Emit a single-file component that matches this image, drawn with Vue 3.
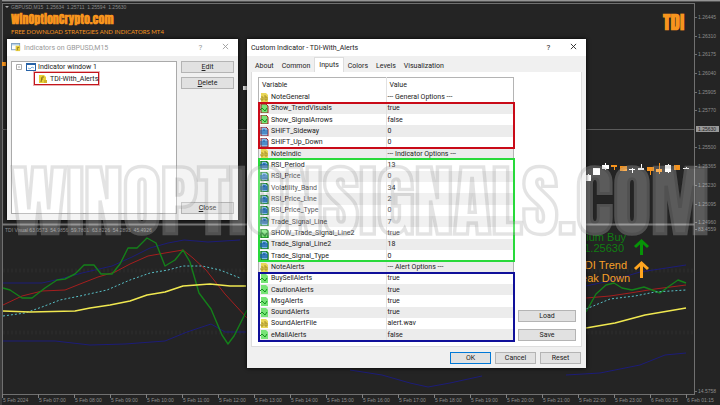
<script setup>
const bool = 'bool', str = 'str', num = 'num'
const groups = [
  { tone: 'plain', rows: [[str, 'NoteGeneral', '--- General Options ---']] },
  { tone: 'red', rows: [[bool, 'Show_TrendVisuals', 'true'], [bool, 'Show_SignalArrows', 'false'], [num, 'SHIFT_Sideway', '0'], [num, 'SHIFT_Up_Down', '0']] },
  { tone: 'plain', rows: [[str, 'NoteIndic', '--- Indicator Options ---']] },
  { tone: 'green', rows: [[num, 'RSI_Period', '13'], [num, 'RSI_Price', '0'], [num, 'Volatility_Band', '34'], [num, 'RSI_Price_Line', '2'], [num, 'RSI_Price_Type', '0'], [num, 'Trade_Signal_Line', '7'], [bool, 'SHOW_Trade_Signal_Line2', 'true'], [num, 'Trade_Signal_Line2', '18'], [num, 'Trade_Signal_Type', '0']] },
  { tone: 'plain', rows: [[str, 'NoteAlerts', '--- Alert Options ---']] },
  { tone: 'blue', rows: [[bool, 'BuySellAlerts', 'true'], [bool, 'CautionAlerts', 'true'], [bool, 'MsgAlerts', 'true'], [bool, 'SoundAlerts', 'true'], [str, 'SoundAlertFile', 'alert.wav'], [bool, 'eMailAlerts', 'false']] }
]
let n = 0
for (const g of groups) g.rows = g.rows.map(([type, name, value]) => ({ type, name, value, shaded: n++ % 2 === 1 }))

const tabs = ['About', 'Common', 'Inputs', 'Colors', 'Levels', 'Visualization']
const prices = [[17, '1.26445'], [36, '1.26310'], [54, '1.26175'], [73, '1.26040'], [92, '1.25905'], [110, '1.25770'], [147, '1.25500'], [166, '1.25365'], [185, '1.25230'], [204, '1.25095'], [222, '1.24960'], [229, '83.4559'], [391, '14.5758']]
const times = ['5 Feb 2024', '5 Feb 07:00', '5 Feb 08:00', '5 Feb 09:00', '5 Feb 10:00', '5 Feb 11:00', '5 Feb 12:00', '5 Feb 13:00', '5 Feb 14:00', '5 Feb 15:00', '5 Feb 16:00', '5 Feb 17:00', '5 Feb 18:00', '5 Feb 19:00', '5 Feb 20:00', '5 Feb 21:00', '5 Feb 22:00', '5 Feb 23:00', '6 Feb 00:15', '6 Feb 01:15']
const white = '#fff', orange = '#f7941d'
// x, body top, body height, wick top, wick bottom, width, colour
const candles = [
  [585, 175, 6, 174, 181, 6, white], [593, 168, 7, 168, 175, 7, white], [602, 165, 4, 163, 170, 7, white],
  [611, 165, 2, 165, 170, 6, orange], [620, 166, 5, 166, 171, 7, orange], [629, 169, 1, 168, 173, 6, white],
  [638, 168, 2, 164, 170, 6, white], [647, 167, 4, 167, 175, 7, orange], [656, 169, 3, 163, 174, 6, orange],
  [665, 165, 7, 164, 173, 6, white], [674, 165, 5, 165, 170, 6, orange], [683, 168, 1, 167, 169, 6, white]
]
</script>

<template>
  <main class="desktop">
    <svg class="chart" viewBox="0 0 720 405" preserveAspectRatio="none" role="img" aria-label="GBPUSD M15 chart">
      <rect width="720" height="405" fill="#242424" />
      <rect width="720" height="1" fill="#949494" />
      <rect y="1" width="720" height="1" fill="#555" />
      <rect width="2" height="405" fill="#3c3c3c" />
      <path d="M2.5 3V395M2 3.5H695M694.5 3V395M2 394.5H695" stroke="#707070" fill="none" />
      <path d="M2 224.5H695" stroke="#777" stroke-width="2" />
      <path d="M2 129.5H694" stroke="#5b5b5b" />
      <path d="M3 270.5H694M3 332.5H694" stroke="#292929" stroke-dasharray="2 2" stroke-width="4" />
      <path d="M5 6h4l-2 2z" fill="#aaa" />
      <rect x="2" y="62" width="4" height="4" fill="#f7941d" />
      <rect x="243" y="86" width="4" height="4" fill="#ddd" />
      <text x="11" y="9" class="axis">GBPUSD,M15&#160; 1.25634&#160; 1.25711&#160; 1.25594&#160; 1.25630</text>
      <text x="5" y="232" class="axis">TDI Visual 63.9573&#160; 54.9856&#160; 59.7801&#160; 63.8226&#160; 54.2893&#160; 45.4926</text>
      <g v-for="[y, label] in prices" :key="label">
        <path :d="`M694 ${y}.5h3`" stroke="#707070" />
        <text x="698" :y="y + 2" class="axis">{{ label }}</text>
      </g>
      <rect x="696" y="126" width="23" height="6" fill="#999" />
      <text x="698" y="131" class="axis dark">1.25630</text>
      <g v-for="(label, i) in times" :key="label">
        <path :d="`M${2.5 + i * 36} 394v4`" stroke="#808080" />
        <text :x="3 + i * 36" y="402" class="axis">{{ label }}</text>
      </g>

      <g fill="none" stroke-linejoin="round">
        <path class="band" d="M3 283H42L60 279L82 273L112 266L132 257L150 248L168 243L184 240L208 242L240 240" />
        <path class="band" d="M3 341H55L90 345L125 344L165 341L187 332L211 324L225 332H246M350 370L382 375L410 383L428 387L450 383L482 376M566 375L600 373L640 365L665 355L686 353M566 290L610 281L640 272L686 265" />
        <path class="red" d="M3 305L22 296L42 291L65 290L80 284L98 277L115 272L130 264L148 256L165 253L183 250L193 258L206 270L225 294L247 318M586 298L610 296L630 293L655 289L686 285" />
        <path class="green" d="M3 288L10 290L22 298H32L45 288L57 280L65 279L75 274L84 265H94L101 274H112L120 264L128 248H137L147 238L156 243L165 266L175 260L183 250L190 262L199 293L211 309L222 335L228 344L234 336L247 310M586 312L596 294L606 285L614 283L622 288L632 290L644 287L660 293L668 287L678 280L686 283" />
        <path class="cyan" d="M3 316L25 313L42 307L60 300L80 296L107 290L130 280L150 273L168 270L183 266H202L220 270L240 278M586 309L610 299L635 296L655 292L686 290" />
        <path class="yellow" d="M3 311L30 312L75 311L90 308L110 305L130 301L147 295L165 292L183 286L210 284L230 286H246M586 328L615 323L645 315L686 308" />
      </g>
      <g v-for="[x, y, h, top, bottom, w, color] in candles" :key="x" :fill="color">
        <rect :x="x" :y="y" :width="w" :height="h" />
        <rect :x="x + 3" :y="top" width="1" :height="bottom - top" />
      </g>
      <g fill="none" stroke-width="3">
        <path d="M641.500 255V242M635 247L641.500 241L648 247" stroke="#079307" />
        <path d="M641.500 278V264M635 269L641.500 263L648 269" stroke="#ffa51f" />
      </g>
      <text x="626" y="241" class="signal buy">Medium Buy</text>
      <text x="624" y="252" class="signal buy">1.25630</text>
      <text x="627" y="269" class="signal trend">TDI Trend</text>
      <text x="630" y="282" class="signal trend">Break Down</text>
      <text x="663" y="30" class="badge">TDI</text>
    </svg>

    <header class="brand">
      <h1>WinOptionCrypto.com</h1>
      <p>FREE DOWNLOAD STRATEGIES AND INDICATORS MT4</p>
    </header>

    <section class="window list-window" aria-label="Indicators on GBPUSD,M15">
      <div class="title-bar inactive">
        <svg class="title-icon" viewBox="0 0 12 10"><rect x=".5" y=".5" width="9" height="7" fill="#fff" stroke="#779bbd" /><path d="M1 2h8" stroke="#8bb7da" /><rect x="5" y="3" width="5" height="6" fill="#e6cc3e" /><path d="M7 8V5h2" stroke="#927a22" fill="none" /></svg>
        <span>Indicators on GBPUSD,M15</span>
        <button class="glyph" aria-label="Help">?</button>
        <button class="glyph" aria-label="Close window"><svg viewBox="0 0 8 8"><path d="M1 1l6 6M7 1L1 7" /></svg></button>
      </div>
      <div class="list-body">
        <ul class="tree">
          <li><svg class="toggle" viewBox="0 0 6 6"><path d="M.5.500h5v5h-5zM2 3h2" /></svg><svg class="tree-icon" viewBox="0 0 10 8"><rect x=".5" y=".5" width="9" height="7" fill="#fff" stroke="#2863a7" /><path d="M0 1h10" stroke="#2863a7" stroke-width="2" /><path d="M2 5l2 1 2-2 2 1" stroke="#7cb1df" fill="none" /></svg>Indicator window 1</li>
          <li class="selected"><svg class="tree-icon" viewBox="0 0 10 8"><path d="M1 0h5l2 2v6H1z" fill="#e8d136" /><path d="M3 7l1-5h2M3 4h2" stroke="#8a701c" fill="none" /><path d="M6 8V5h3v3z" fill="#d1b22b" /></svg>TDI-With_Alerts</li>
        </ul>
        <div class="side">
          <button><u>E</u>dit</button>
          <button><u>D</u>elete</button>
          <button class="last"><u>C</u>lose</button>
        </div>
      </div>
    </section>

    <section class="window input-window" aria-label="Custom Indicator - TDI-With_Alerts">
      <div class="title-bar">
        <span>Custom Indicator - TDI-With_Alerts</span>
        <button class="glyph" aria-label="Help">?</button>
        <button class="glyph" aria-label="Close window"><svg viewBox="0 0 8 8"><path d="M1 1l6 6M7 1L1 7" /></svg></button>
      </div>
      <nav class="tabs" role="tablist">
        <button v-for="tab in tabs" :key="tab" role="tab" :aria-selected="tab === 'Inputs'" :class="{ active: tab === 'Inputs' }">{{ tab }}</button>
      </nav>
      <div class="panel">
        <table>
          <thead><tr><th>Variable</th><th>Value</th></tr></thead>
          <tbody v-for="(group, i) in groups" :key="i" :class="group.tone">
            <tr v-for="row in group.rows" :key="row.name" :class="{ shaded: row.shaded }">
              <td>
                <svg class="type" :class="row.type" viewBox="0 0 9 9">
                  <path class="sheet" d="M1 0h5l2 2v7H1z" />
                  <path v-if="row.type === 'bool'" class="mark" d="M0 6l2-2 3 3 2-3" />
                  <path v-else-if="row.type === 'num'" class="mark" d="M1 3v4M3 3v4M3 3h2v4M7 3v4" />
                  <path v-else class="mark" d="M1 4h2v3H1V5M5 2v5h2V4H5" />
                </svg>{{ row.name }}
              </td>
              <td>{{ row.value }}</td>
            </tr>
          </tbody>
        </table>
        <div class="file-actions"><button>Load</button><button>Save</button></div>
      </div>
      <footer><button class="primary">OK</button><button>Cancel</button><button>Reset</button></footer>
    </section>

    <div class="watermark">WINOPTIONSIGNALS.COM</div>
  </main>
</template>

<style>
body { margin: 0; background: #242424; }
</style>

<style scoped>
* { box-sizing: border-box; }
.desktop { position: relative; min-height: 100vh; overflow: hidden; font: 7px/10px Roboto, "Liberation Sans", sans-serif; color: #222; }
.chart { position: absolute; inset: 0; width: 100%; height: 100%; }
.axis { font: 5px "Liberation Sans", sans-serif; fill: #8c8c8c; }
.dark { fill: #222; }
.band { stroke: #1c1c78; stroke-width: 1; }
.red { stroke: #a51e1e; stroke-width: 1; }
.green { stroke: #14801a; stroke-width: 1.4; }
.cyan { stroke: #58bfc6; stroke-width: 1; stroke-dasharray: 2 2; }
.yellow { stroke: #f0e850; stroke-width: 1.6; }
.signal { font: 11px "Liberation Sans", sans-serif; text-anchor: end; }
.buy { fill: #107d12; }
.trend { fill: #f7a028; }
.badge { font: 900 19px Impact, Anton, sans-serif; fill: #f7941d; }
.brand { position: absolute; left: 11px; top: 12px; color: #f7941d; }
h1 { margin: 0; font: 900 12px/14px Impact, Anton, sans-serif; }
.brand p { margin: 0; font: 6px/9px Lato, sans-serif; padding-top: 1px; }
button { font: inherit; color: inherit; padding: 0; margin: 0; border: 1px solid #b4b4b4; background: #e1e1e1; height: 12px; line-height: 10px; }
.window { position: absolute; background: #f0f0f0; display: flex; flex-direction: column; box-shadow: 0 0 4px #000; }
.list-window { left: 7px; top: 39px; width: 231px; height: 181px; }
.input-window { left: 247px; top: 39px; width: 339px; height: 329px; }
.title-bar { height: 17px; flex: none; display: flex; align-items: center; background: #fff; padding-left: 4px; }
.title-bar span { flex: 1; white-space: nowrap; }
.inactive { color: #999; }
.title-icon { width: 11px; height: 9px; margin-right: 2px; }
.glyph { width: 25px; height: 16px; border: 0; background: none; font-size: 8px; line-height: 16px; }
.glyph svg { width: 7px; height: 7px; stroke: currentColor; fill: none; }
.list-body { flex: 1; display: flex; gap: 4px; padding: 5px 4px 6px; }
.tree { flex: 1; margin: 0; padding: 0 4px; list-style: none; background: #fff; border: 1px solid #aaa; }
.tree li { display: flex; align-items: center; height: 10px; white-space: nowrap; }
.tree-icon { flex: none; width: 10px; height: 8px; margin-right: 2px; }
.toggle { width: 6px; height: 6px; margin-right: 4px; stroke: #aaa; fill: none; }
.tree .selected { width: 65px; height: 13px; margin-left: 18px; padding-left: 3px; border: 1px solid #c4151b; outline: 1px solid #c4151b55; }
.side { width: 53px; display: flex; flex-direction: column; gap: 4px; }
.last { margin-top: auto; }
.tabs { display: flex; align-items: flex-end; height: 16px; padding-left: 4px; flex: none; }
.tabs button { height: 13px; border: 0; background: none; padding: 0 4px; }
.tabs .active { height: 15px; background: #fff; border: 1px solid #ddd; border-bottom: 0; }
.panel { flex: 1; margin: 0 4px; padding: 5px 5px 5px 6px; background: #fff; border: 1px solid #ddd; border-top: 0; display: flex; gap: 4px; }
table { flex: 1; width: 100%; border-collapse: collapse; table-layout: fixed; border: 1px solid #b4b4b4; }
th { height: 14px; font-weight: 400; text-align: left; padding: 0 3px; }
td { height: 11px; padding: 0 1px; line-height: 10px; white-space: nowrap; }
td + td, th + th { border-left: 1px solid #e2e2e2; }
.shaded { background: #ececec; }
.type { width: 9px; height: 9px; vertical-align: middle; margin-right: 2px; }
.bool .sheet { fill: #77e476; }
.bool .mark { stroke: #158f20; }
.num .sheet { fill: #80b8e8; }
.num .mark { stroke: #1760a7; }
.str .sheet { fill: #e9d657; }
.str .mark { stroke: #a8922a; }
.mark { fill: none; }
tbody.red { outline: 2px solid #c90b18; outline-offset: -1px; }
tbody.green { outline: 2px solid #28d93a; outline-offset: -1px; }
tbody.blue { outline: 2px solid #10109a; outline-offset: -1px; }
.file-actions { flex: none; width: 58px; display: flex; flex-direction: column; justify-content: flex-end; gap: 7px; }
footer { height: 21px; flex: none; display: flex; justify-content: flex-end; gap: 4px; align-items: center; padding-right: 5px; }
footer button { width: 41px; }
.primary { border-color: #0078d7; }
.watermark { position: absolute; left: 0; right: 0; top: 155px; text-align: center; white-space: nowrap; font: 900 78px/92px Impact, Anton, sans-serif; color: #ffffff40; -webkit-text-stroke: 1px #0000001c; pointer-events: none; }
</style>
